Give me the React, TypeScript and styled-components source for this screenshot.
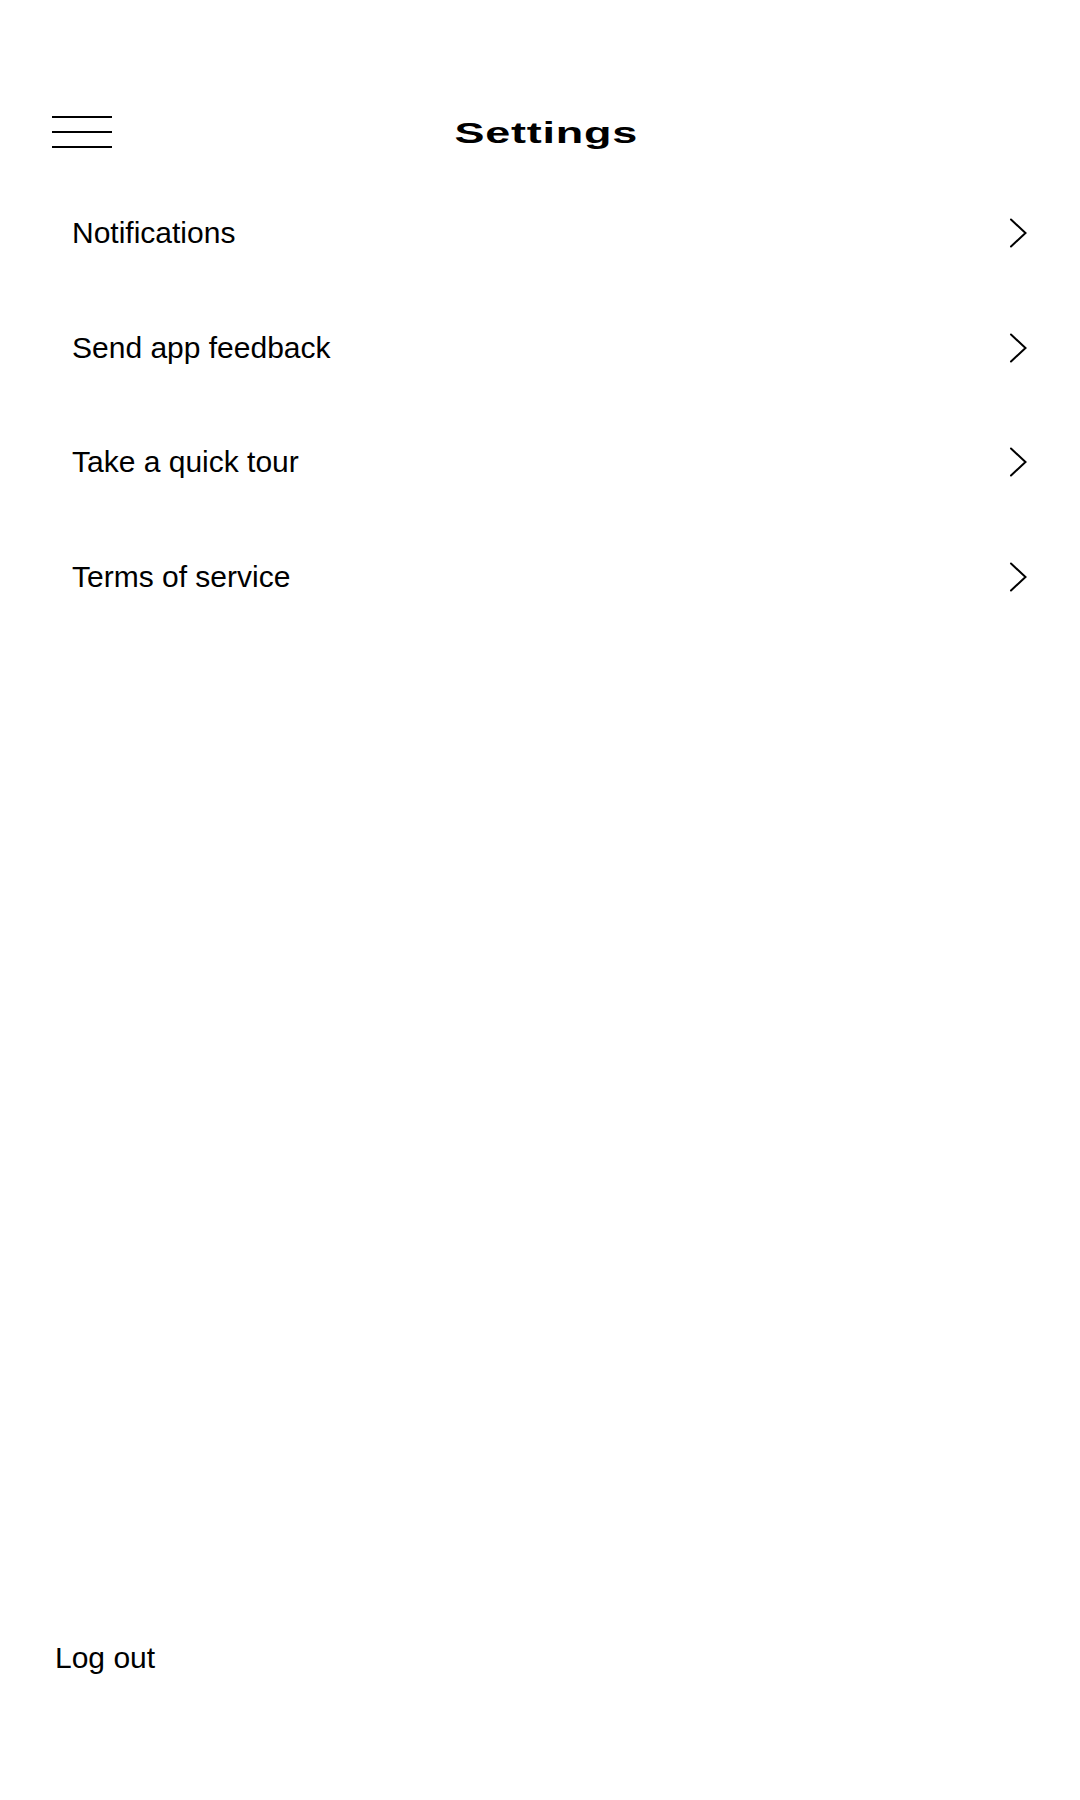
import * as React from 'react'
import styled, { createGlobalStyle } from 'styled-components'

const GlobalStyle = createGlobalStyle`
  html,
  body {
    margin: 0;
    padding: 0;
    background: #ffffff;
  }
  body {
    font-family: 'Liberation Sans', Arial, sans-serif;
    color: #000000;
  }
`

const items = [
  'Notifications',
  'Send app feedback',
  'Take a quick tour',
  'Terms of service',
]

const Page = styled.div`
  display: flex;
  flex-direction: column;
  min-height: 1800px;
  padding-top: 88px;
  box-sizing: border-box;
`

const Header = styled.header`
  display: grid;
  grid-template-columns: 1fr auto 1fr;
  align-items: center;
  height: 88px;
  padding: 0 40px 0 52px;
`

const MenuButton = styled.button`
  display: flex;
  flex-direction: column;
  gap: 13px;
  width: 60px;
  padding: 0;
  border: none;
  background: transparent;
  cursor: pointer;
  span {
    display: block;
    height: 2px;
    background: #000000;
  }
`

const Title = styled.h1`
  margin: 3px 0 0;
  font-size: 29px;
  font-weight: bold;
  letter-spacing: 0.5px;
  line-height: 1;
  transform: scaleX(1.55);
`

const List = styled.ul`
  margin: 0;
  padding: 0;
  list-style: none;
`

const Row = styled.li`
  display: flex;
  align-items: center;
  justify-content: space-between;
  height: 114.5px;
  padding: 0 53px 0 72px;
  font-size: 30px;
  line-height: 34px;
  cursor: pointer;
`

const Chevron = () => (
  <svg width="18" height="30" viewBox="0 0 18 30" fill="none">
    <polyline
      points="2,1.5 16.5,15 2,28.5"
      stroke="#000"
      strokeWidth="2"
      strokeLinecap="round"
      strokeLinejoin="miter"
    />
  </svg>
)

const Footer = styled.footer`
  margin-top: auto;
  padding: 0 0 125px 55px;
  font-size: 30px;
  line-height: 34px;
`

const App: React.FC = () => (
  <>
    <GlobalStyle />
    <Page>
      <Header>
        <MenuButton aria-label="Menu">
          <span />
          <span />
          <span />
        </MenuButton>
        <Title>Settings</Title>
        <div />
      </Header>
      <List>
        {items.map((item) => (
          <Row key={item}>
            <span>{item}</span>
            <Chevron />
          </Row>
        ))}
      </List>
      <Footer>Log out</Footer>
    </Page>
  </>
)

export default App
